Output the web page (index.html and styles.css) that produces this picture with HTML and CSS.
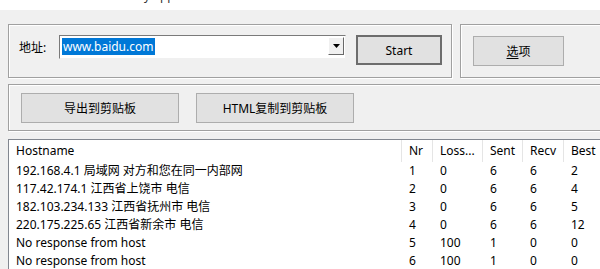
FILE: index.html
```html
<!DOCTYPE html>
<html lang="zh-CN">
<head>
    <meta charset="UTF-8">
    <title>Tracert</title>
    <link rel="stylesheet" href="styles.css">
</head>
<body>
    <div class="titlebar"><span class="title">Route trace by app</span></div>

    <div class="main">
        <!-- 地址栏 -->
        <div class="row">
            <div class="group group-addr">
                <label class="addr-label">地址:</label>
                <div class="combo">
                    <span class="combo-text"><span class="sel">www.baidu.com</span></span>
                    <span class="combo-arrow">
                        <svg width="7" height="4" viewBox="0 0 7 4"><path d="M0 0h7L3.5 4z" fill="#000"/></svg>
                    </span>
                </div>
                <button class="btn btn-default">Start</button>
            </div>
            <div class="group group-opt">
                <button class="btn btn-opt"><u>选</u>项</button>
            </div>
        </div>

        <!-- 导出 -->
        <div class="group group-export">
            <button class="btn btn-export">导出到剪贴板</button>
            <button class="btn btn-export">HTML复制到剪贴板</button>
        </div>

        <!-- 结果列表 -->
        <div class="list">
            <div class="list-head">
                <div class="th">Hostname</div>
                <div class="th">Nr</div>
                <div class="th">Loss...</div>
                <div class="th">Sent</div>
                <div class="th">Recv</div>
                <div class="th">Best</div>
            </div>
            <div class="list-row"><div>192.168.4.1 局域网 对方和您在同一内部网</div><div>1</div><div>0</div><div>6</div><div>6</div><div>2</div></div>
            <div class="list-row"><div>117.42.174.1 江西省上饶市 电信</div><div>2</div><div>0</div><div>6</div><div>6</div><div>4</div></div>
            <div class="list-row"><div>182.103.234.133 江西省抚州市 电信</div><div>3</div><div>0</div><div>6</div><div>6</div><div>5</div></div>
            <div class="list-row"><div>220.175.225.65 江西省新余市 电信</div><div>4</div><div>0</div><div>6</div><div>6</div><div>12</div></div>
            <div class="list-row"><div>No response from host</div><div>5</div><div>100</div><div>1</div><div>0</div><div>0</div></div>
            <div class="list-row"><div>No response from host</div><div>6</div><div>100</div><div>1</div><div>0</div><div>0</div></div>
        </div>
    </div>
</body>
</html>
```

FILE: styles.css
```css
body {
    margin: 0;
    width: 600px;
    height: 269px;
    overflow: hidden;
    background-color: #f0f0f0;
    font-family: "Noto Sans", "Noto Sans CJK SC", sans-serif;
    font-size: 12px;
    color: #000;
}
.titlebar {
    height: 10px;
    background: #ffffff;
    overflow: hidden;
    position: relative;
}
.title {
    position: absolute;
    left: 69px;
    top: -11px;
    font-size: 12px;
    line-height: 14px;
    color: #333;
}
.main {
    padding: 14px 0 0 8px;
}
.row {
    display: flex;
    gap: 8px;
}
.group {
    box-sizing: border-box;
    flex-shrink: 0;
    border: 1px solid #a0a0a0;
    box-shadow: inset 1px 1px 0 #fff, 1px 1px 0 #fff;
}
.group-addr {
    width: 444px;
    height: 54px;
    display: flex;
    align-items: flex-start;
    padding: 10px 0 0 10px;
}
.addr-label {
    width: 40px;
    line-height: 24px;
    padding-top: 1px;
}
.combo {
    box-sizing: border-box;
    width: 287px;
    height: 24px;
    background: #fff;
    border: 1px solid #7a7a7a;
    border-right-color: #f0f0f0;
    border-bottom-color: #f0f0f0;
    display: flex;
    align-items: flex-start;
    padding: 2px 1px 0 2px;
}
.combo-text {
    flex: 1;
    line-height: 17px;
}
.sel {
    background: #0078d7;
    color: #fff;
    display: inline-block;
    padding: 0 1px;
}
.combo-arrow {
    box-sizing: border-box;
    width: 16px;
    height: 18px;
    margin-top: -1px;
    background: #f0f0f0;
    border: 1px solid #fff;
    border-right-color: #696969;
    border-bottom-color: #696969;
    display: flex;
    align-items: center;
    justify-content: center;
}
.btn {
    box-sizing: border-box;
    flex-shrink: 0;
    height: 30px;
    background: #e1e1e1;
    border: 1px solid #adadad;
    font-family: "Noto Sans", "Noto Sans CJK SC", sans-serif;
    font-size: 12px;
    color: #000;
    padding: 0;
}
.btn u {
    text-underline-offset: 2px;
}
.btn-default {
    width: 86px;
    margin-left: 10px;
    border: 2px solid #6d6d6d;
}
.group-opt {
    width: 148px;
    height: 54px;
    padding: 11px 0 0 12px;
}
.btn-opt {
    width: 91px;
}
.group-export {
    margin-top: 6px;
    width: 600px;
    height: 47px;
    padding: 8px 0 0 12px;
    display: flex;
    gap: 17px;
}
.btn-export {
    width: 158px;
}
.list {
    box-sizing: border-box;
    margin-top: 8px;
    width: 600px;
    height: 130px;
    overflow: hidden;
    background: #fff;
    border-top: 1px solid #828790;
    border-left: 1px solid #828790;
}
.list-head,
.list-row {
    display: grid;
    grid-template-columns: 393px 31px 50px 40px 41px 37px;
}
.list-head {
    height: 21px;
    line-height: 22px;
    margin-bottom: 1px;
}
.th {
    padding-left: 7px;
    border-right: 1px solid #e5e5e5;
}
.list-row {
    height: 18px;
    line-height: 18px;
}
.list-row div {
    padding-left: 7px;
    white-space: nowrap;
}
```
